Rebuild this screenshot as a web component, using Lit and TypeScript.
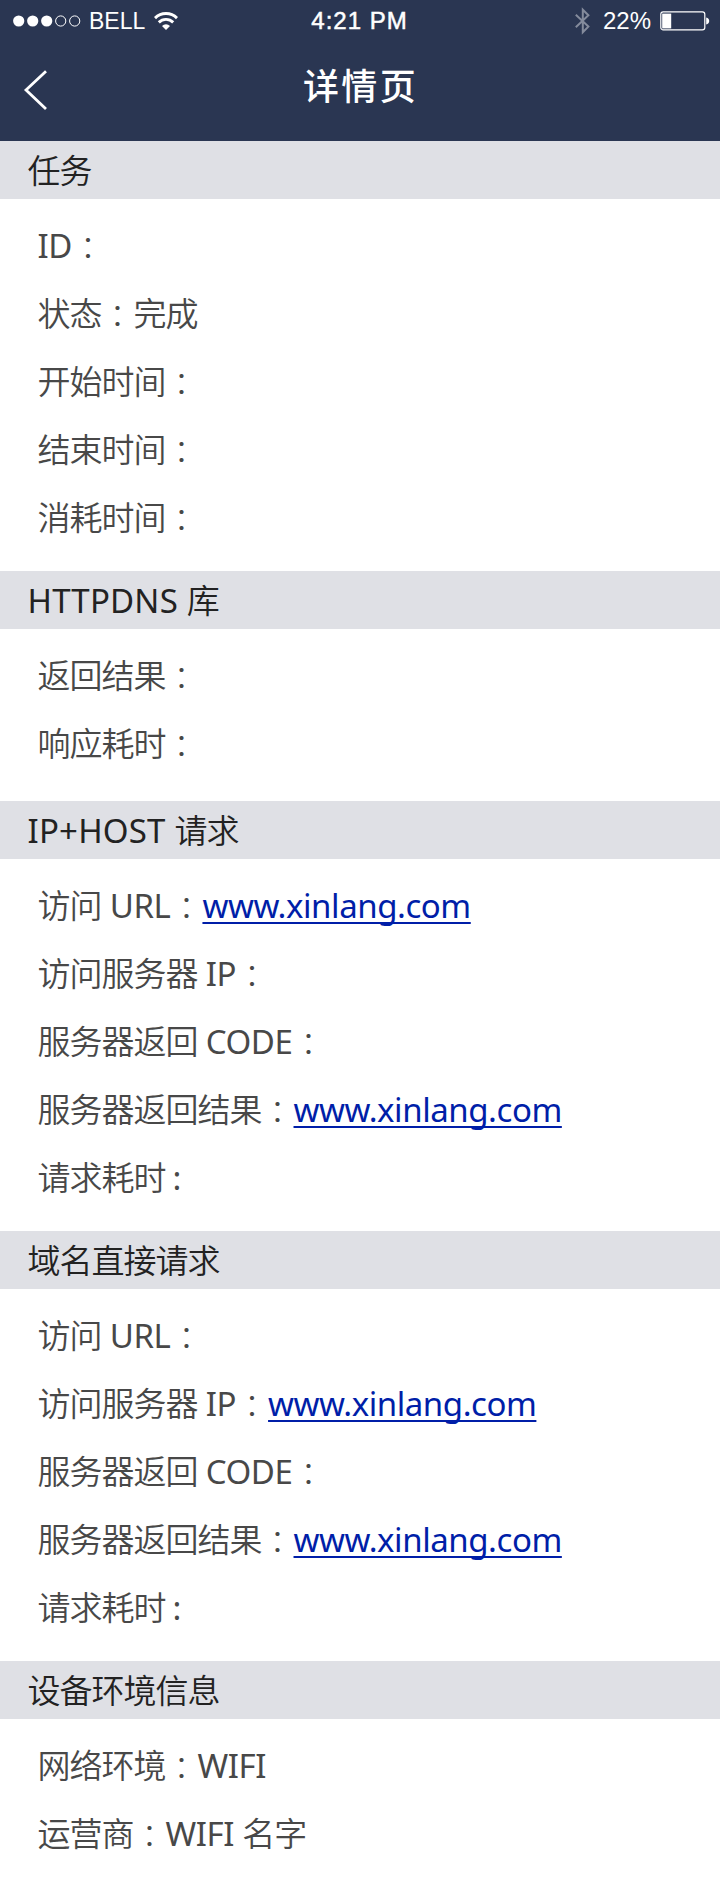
import { LitElement, html, css, svg } from "lit";
import { customElement, property } from "lit/decorators.js";

interface Segment {
  kind: "cjk" | "latin" | "colon" | "tight" | "link";
  text: string;
}

interface Section {
  title: Segment[];
  rows: Segment[][];
}

const cjk = (text: string): Segment => ({ kind: "cjk", text });
const latin = (text: string): Segment => ({ kind: "latin", text });
const link = (text: string): Segment => ({ kind: "link", text });
const colon: Segment = { kind: "colon", text: "：" };
const tight: Segment = { kind: "tight", text: ":" };
const site = "www.xinlang.com";

const sections: Section[] = [
  {
    title: [cjk("任务")],
    rows: [
      [latin("ID"), colon],
      [cjk("状态"), colon, cjk("完成")],
      [cjk("开始时间"), colon],
      [cjk("结束时间"), colon],
      [cjk("消耗时间"), colon],
    ],
  },
  {
    title: [latin("HTTPDNS "), cjk("库")],
    rows: [
      [cjk("返回结果"), colon],
      [cjk("响应耗时"), colon],
    ],
  },
  {
    title: [latin("IP+HOST "), cjk("请求")],
    rows: [
      [cjk("访问"), latin(" URL"), colon, link(site)],
      [cjk("访问服务器"), latin(" IP"), colon],
      [cjk("服务器返回"), latin(" CODE"), colon],
      [cjk("服务器返回结果"), colon, link(site)],
      [cjk("请求耗时"), tight],
    ],
  },
  {
    title: [cjk("域名直接请求")],
    rows: [
      [cjk("访问"), latin(" URL"), colon],
      [cjk("访问服务器"), latin(" IP"), colon, link(site)],
      [cjk("服务器返回"), latin(" CODE"), colon],
      [cjk("服务器返回结果"), colon, link(site)],
      [cjk("请求耗时"), tight],
    ],
  },
  {
    title: [cjk("设备环境信息")],
    rows: [
      [cjk("网络环境"), colon, latin("WIFI")],
      [cjk("运营商"), colon, latin("WIFI "), cjk("名字")],
    ],
  },
];

@customElement("mixed-text")
class MixedText extends LitElement {
  @property({ attribute: false }) segments: Segment[] = [];

  static styles = css`
    :host {
      display: block;
      white-space: pre;
      font-family: "Noto Sans CJK SC", sans-serif;
      font-size: 33px;
      line-height: 48px;
    }
    span, a { line-height: 1; }
    .cjk { font-weight: 350; letter-spacing: -1px; }
    .latin, .link, .tight { font-family: "Noto Sans", sans-serif; }
    .latin { letter-spacing: var(--latin-tracking, -0.4px); }
    .colon {
      display: inline-block;
      font-family: "Noto Sans CJK TC", sans-serif;
      font-size: 32px;
      font-weight: 300;
      vertical-align: -2px;
    }
    .tight { padding-left: 7px; }
    .link {
      color: #001ea8;
      letter-spacing: -0.44px;
      text-decoration: underline;
      text-decoration-thickness: 1.5px;
      text-underline-offset: 4px;
      text-decoration-skip-ink: none;
    }
  `;

  render() {
    return html`${this.segments.map((s) =>
      s.kind === "link"
        ? html`<a class="link">${s.text}</a>`
        : html`<span class=${s.kind}>${s.text}</span>`
    )}`;
  }
}

@customElement("status-bar")
class StatusBar extends LitElement {
  static styles = css`
    :host {
      display: grid;
      grid-template-columns: 1fr auto 1fr;
      align-items: center;
      height: 41px;
      padding: 0 10px 0 13px;
      color: #fff;
      font-family: "Liberation Sans", Arial, sans-serif;
      font-size: 24px;
      line-height: 42px;
    }
    .left, .right { display: flex; align-items: center; }
    .right { justify-content: flex-end; }
    .carrier { margin-left: 8px; font-size: 23px; }
    .wifi { margin-left: 9px; margin-top: -1px; }
    .time { letter-spacing: 1px; margin-right: 4px; -webkit-text-stroke: 0.5px #fff; }
    .bluetooth { margin-right: 13px; }
    .level { margin-right: 9px; }
  `;

  render() {
    return html`
      <div class="left">
        <svg width="68" height="12" viewBox="0 0 68 12">
          ${[0, 1, 2, 3, 4].map((i) =>
            i < 3
              ? svg`<circle cx=${5.7 + i * 14} cy="6" r="5.6" fill="#fff" />`
              : svg`<circle cx=${5.7 + i * 14} cy="6" r="5.1" fill="none" stroke="#fff" stroke-width="1" />`
          )}
        </svg>
        <span class="carrier">BELL</span>
        <svg class="wifi" width="24" height="18" viewBox="0 0 24 18" fill="none" stroke="#fff" stroke-width="2.9">
          <path d="M1 6.1a15.6 15.6 0 0 1 22 0" />
          <path d="M4.8 10.4a10.2 10.2 0 0 1 14.4 0" />
          <path d="M8 14a5.7 5.7 0 0 1 8 0L12 18z" fill="#fff" stroke="none" />
        </svg>
      </div>
      <span class="time">4:21 PM</span>
      <div class="right">
        <svg class="bluetooth" width="15" height="28" viewBox="0 0 15 28" fill="none" stroke="#848b9c" stroke-width="2">
          <path d="M.8 7.8 13.4 19.6 7.8 25.3V2.7l5.6 5.6L.8 20.2" />
        </svg>
        <span class="level">22%</span>
        <svg width="50" height="20" viewBox="0 0 50 20">
          <rect x=".8" y=".9" width="44" height="18" rx="2.4" fill="none" stroke="#fff" stroke-width="1.2" />
          <rect x="2.2" y="2.6" width="9" height="14.8" fill="#fff" />
          <path d="M46.2 6.5q3 .8 3 3.5t-3 3.5z" fill="#fff" />
        </svg>
      </div>
    `;
  }
}

@customElement("app-root")
class AppRoot extends LitElement {
  static styles = css`
    :host {
      display: block;
      width: 720px;
      height: 1901px;
      overflow: hidden;
      background: #fff;
    }
    .header { height: 141px; background: #2a3652; }
    .nav {
      display: grid;
      grid-template-columns: 100px 1fr 100px;
      align-items: center;
      height: 90px;
    }
    .back { margin: 7px 0 0 23px; display: block; }
    .title {
      margin: 0 0 4px 1px;
      text-align: center;
      color: #fff;
      font: 500 36px/54px "Noto Sans CJK SC", sans-serif;
      letter-spacing: 2.4px;
    }
    .bar {
      display: flex;
      align-items: center;
      height: 58px;
      box-sizing: border-box;
      padding: 0 0 2px 27.5px;
      background: #dfe0e5;
      color: #222;
      --latin-tracking: 0.2px;
    }
    .rows { padding: 11px 0 21px 37.5px; color: #484848; }
    .rows.short { padding-bottom: 25px; }
    .row { display: flex; align-items: center; height: 68px; }
  `;

  render() {
    return html`
      <header class="header">
        <status-bar></status-bar>
        <div class="nav">
          <svg class="back" width="26" height="42" viewBox="0 0 26 42" fill="none" stroke="#fff" stroke-width="2.8">
            <path d="M23 2.2 3 21l20 19" />
          </svg>
          <h1 class="title">详情页</h1>
        </div>
      </header>
      ${sections.map(
        (s) => html`
          <section>
            <div class="bar"><mixed-text .segments=${s.title}></mixed-text></div>
            <div class=${s.rows.length < 3 ? "rows short" : "rows"}>
              ${s.rows.map((r) => html`<div class="row"><mixed-text .segments=${r}></mixed-text></div>`)}
            </div>
          </section>
        `
      )}
    `;
  }
}
